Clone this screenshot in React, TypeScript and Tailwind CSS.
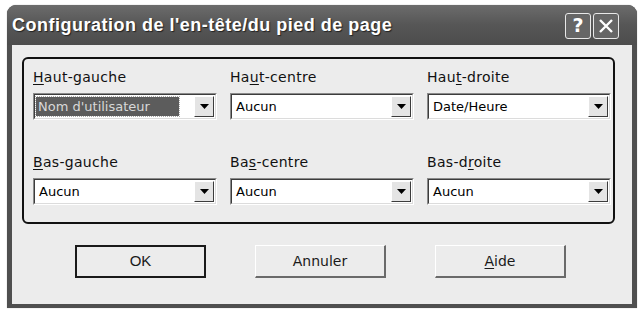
import React from 'react';

const font = { fontFamily: '"DejaVu Sans", Verdana, sans-serif' };

type Cell = { before: string; key: string; after: string; value: string; selected?: boolean };

const rows: Cell[][] = [
  [
    { before: '', key: 'H', after: 'aut-gauche', value: "Nom d'utilisateur", selected: true },
    { before: 'Ha', key: 'u', after: 't-centre', value: 'Aucun' },
    { before: 'Hau', key: 't', after: '-droite', value: 'Date/Heure' },
  ],
  [
    { before: '', key: 'B', after: 'as-gauche', value: 'Aucun' },
    { before: 'Ba', key: 's', after: '-centre', value: 'Aucun' },
    { before: 'Bas-d', key: 'r', after: 'oite', value: 'Aucun' },
  ],
];

const Arrow = () => (
  <svg width="9" height="5" viewBox="0 0 9 5">
    <path d="M0 0h9L4.5 5z" fill="#000" />
  </svg>
);

const Combo: React.FC<{ value: string; selected?: boolean }> = ({ value, selected }) => (
  <div className="w-[184px] h-[27px] border-t border-l border-t-[#8a8a8a] border-l-[#8a8a8a] border-r border-b border-r-white border-b-white">
    <div className="h-full flex border-t border-l border-t-[#3c3c3c] border-l-[#3c3c3c] border-r border-b border-r-[#dcdcdc] border-b-[#dcdcdc] bg-white">
      <div className="flex-1 flex items-center px-[1px]">
        {selected ? (
          <span className="h-[19px] w-[143px] flex items-center pl-[2px] bg-[#5c5c5c] text-[#d8d8d8] outline-1 outline-dotted outline-[#aaa] text-[13px] leading-none">
            {value}
          </span>
        ) : (
          <span className="pl-[3px] text-[13px] leading-none text-black">{value}</span>
        )}
      </div>
      <div className="w-[20px] m-[1px] bg-[#e4e4e4] border-t border-l border-t-white border-l-white border-r border-b border-r-[#3c3c3c] border-b-[#3c3c3c] flex items-center justify-center">
        <Arrow />
      </div>
    </div>
  </div>
);

const Button: React.FC<{ children: React.ReactNode; primary?: boolean }> = ({ children, primary }) =>
  primary ? (
    <div className="w-[131px] h-[33px] border-2 border-[#1a1a1a] bg-[#ececec] flex items-center justify-center text-[14px] text-[#1a1a1a]">
      {children}
    </div>
  ) : (
    <div className="w-[131px] h-[33px] border-t border-l border-t-white border-l-white border-r-2 border-b-2 border-r-[#6a6a6a] border-b-[#6a6a6a] bg-[#ececec] flex items-center justify-center text-[14px] text-[#1a1a1a]">
      {children}
    </div>
  );

export default function App() {
  return (
    <div className="w-[643px] h-[315px] bg-white pt-[5px] pl-[7px]" style={font}>
      <div className="w-[630px] h-[303px] rounded-t-[9px] bg-[#4f4f4f] flex flex-col shadow-[0_0_1px_#888]">
        <div className="h-[40px] flex items-center pl-[5px] pr-[18px] rounded-t-[9px] bg-gradient-to-b from-[#6c6c6c] via-[#565656] to-[#4c4c4c]">
          <span
            className="flex-1 text-white text-[18px] font-bold tracking-[0.5px] [text-shadow:1px_1px_1px_#222]"
            style={{ fontFamily: '"Liberation Sans", Arial, sans-serif' }}
          >
            Configuration de l'en-tête/du pied de page
          </span>
          <div className="flex gap-[2px] mt-[1px]">
            <div className="w-[26px] h-[26px] rounded-[3px] border border-[#e8e8e8] bg-[#666] flex items-center justify-center text-white text-[19px] font-bold leading-none">
              ?
            </div>
            <div className="w-[26px] h-[26px] rounded-[3px] border border-[#e8e8e8] bg-[#666] flex items-center justify-center">
              <svg width="16" height="16" viewBox="0 0 16 16">
                <path d="M2 2l12 12M14 2L2 14" stroke="#fff" strokeWidth="2.4" />
              </svg>
            </div>
          </div>
        </div>
        <div className="flex-1 mx-[5px] mb-[4px] bg-[#ececec] flex flex-col">
          <div className="mt-[12px] ml-[10px] w-[593px] h-[167px] border-2 border-[#111] rounded-[6px] pl-[9px] pt-[10px]">
            {rows.map((row, r) => (
              <div key={r} className={`flex gap-[13px] ${r === 0 ? 'mb-[34px]' : ''}`}>
                {row.map((c, i) => (
                  <div key={i} className="flex flex-col">
                    <div className="h-[16px] mb-[8px] text-[14px] leading-[16px] text-[#111] tracking-[0.3px]">
                      {c.before}
                      <span className="underline underline-offset-2">{c.key}</span>
                      {c.after}
                    </div>
                    <Combo value={c.value} selected={c.selected} />
                  </div>
                ))}
              </div>
            ))}
          </div>
          <div className="mt-[21px] ml-[63px] flex gap-[49px]">
            <Button primary>
              <span style={{ fontFamily: '"Liberation Sans", Arial, sans-serif' }} className="text-[15px]">
                OK
              </span>
            </Button>
            <Button>Annuler</Button>
            <Button>
              <span className="underline underline-offset-2">A</span>ide
            </Button>
          </div>
        </div>
      </div>
    </div>
  );
}
